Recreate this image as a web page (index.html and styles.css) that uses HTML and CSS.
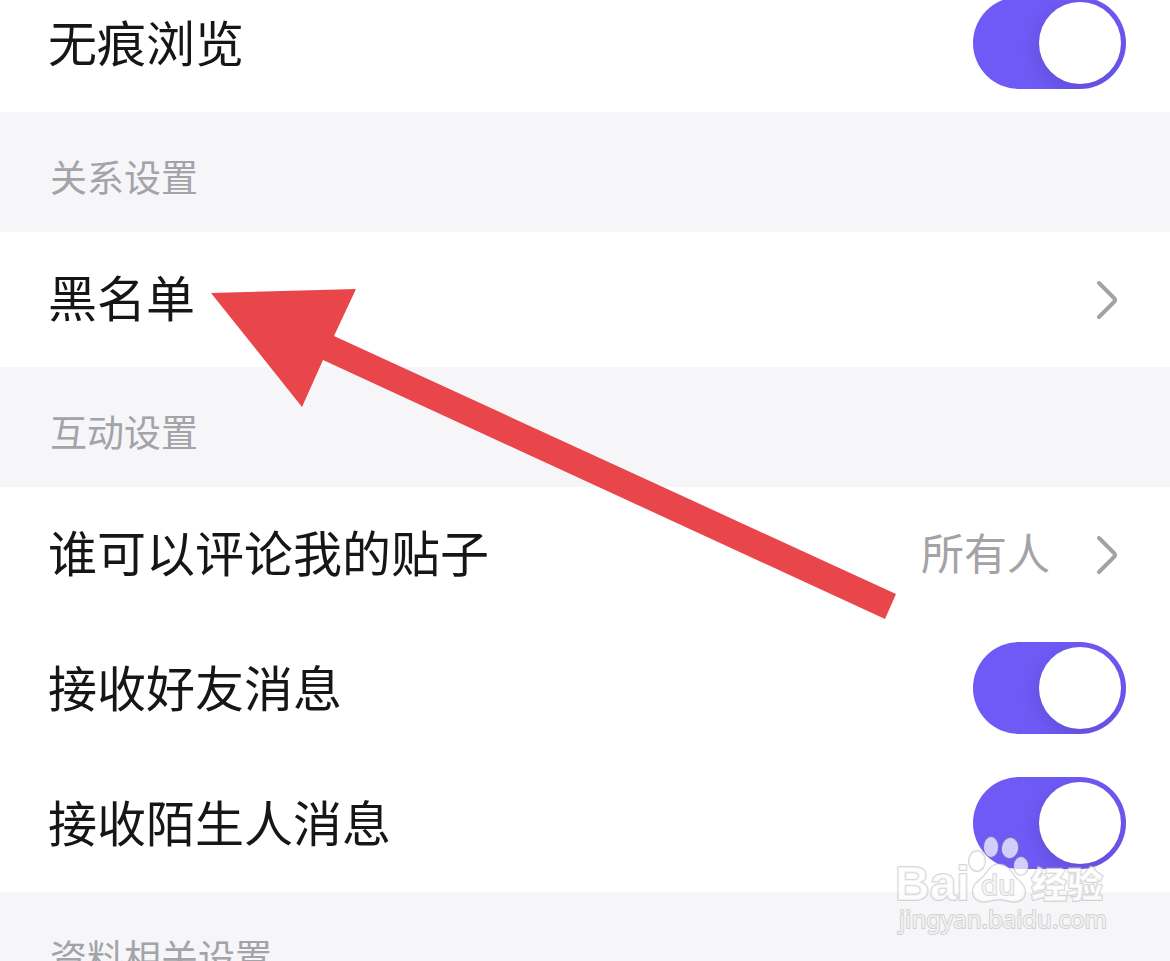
FILE: index.html
```
<!DOCTYPE html>
<html lang="zh-CN">
<head>
    <meta charset="UTF-8">
    <meta name="viewport" content="width=device-width, initial-scale=1.0">
    <title>隐私设置</title>
    <link rel="stylesheet" href="styles.css">
</head>
<body>
    <main class="page">
        <div class="settings">
            <div class="row">
                <label class="name" for="incognito">无痕浏览</label>
                <input type="checkbox" role="switch" class="switch" id="incognito" checked>
            </div>

            <h2 class="section-title">关系设置</h2>
            <a href="#blacklist" class="row">
                <span class="name">黑名单</span>
                <svg class="chevron" viewBox="0 0 22 40"><path d="M3 3 L18 18 Q20 20 18 22 L3 37"/></svg>
            </a>

            <h2 class="section-title">互动设置</h2>
            <a href="#comments" class="row">
                <span class="name">谁可以评论我的贴子</span>
                <span class="value">所有人</span>
                <svg class="chevron" viewBox="0 0 22 40"><path d="M3 3 L18 18 Q20 20 18 22 L3 37"/></svg>
            </a>
            <div class="row">
                <label class="name" for="friendMessages">接收好友消息</label>
                <input type="checkbox" role="switch" class="switch" id="friendMessages" checked>
            </div>
            <div class="row">
                <label class="name" for="strangerMessages">接收陌生人消息</label>
                <input type="checkbox" role="switch" class="switch" id="strangerMessages" checked>
            </div>

            <h2 class="section-title">资料相关设置</h2>
        </div>

        <svg class="arrow" viewBox="0 0 686 330" aria-hidden="true">
            <path d="M0 4 L145 0 L123 47 L685 305 L674 330 L112 71 L91 118 Z"/>
        </svg>

        <svg class="watermark" viewBox="0 0 216 106">
            <g class="paw">
                <ellipse cx="82" cy="29" rx="8" ry="10"/>
                <ellipse cx="96" cy="15" rx="7" ry="10"/>
                <ellipse cx="115" cy="16" rx="8" ry="10" transform="rotate(8 115 16)"/>
                <ellipse cx="126" cy="34" rx="7" ry="9"/>
                <path d="M104 32 C95 32 93 41 87 46 C81 51 77 54 78 61 C79 68 86 71 94 69 C101 67 107 67 114 69 C122 71 130 68 130 60 C130 53 125 50 120 45 C116 40 113 32 104 32 Z"/>
            </g>
            <text class="brand" x="0" y="68">Bai</text>
            <text class="du" x="86" y="63">du</text>
            <text class="brand-cn" x="136" y="66">经验</text>
            <text class="site" x="4" y="96">jingyan.baidu.com</text>
        </svg>
    </main>
</body>
</html>
```
FILE: styles.css
```
* {
    box-sizing: border-box;
}
body {
    margin: 0;
    background-color: white;
    color: #161616;
    font-family: "Noto Sans CJK SC", sans-serif;
}
.page {
    position: relative;
    height: 100vh;
    overflow: hidden;
}
/* list is scrolled a little past its first row */
.settings {
    margin-top: -23px;
}
.row {
    display: flex;
    align-items: center;
    min-height: 135px;
    padding: 0 44px 0 48px;
    color: inherit;
    font-size: 49px;
    line-height: 72px;
    text-decoration: none;
}
.name {
    flex: 1;
    padding-bottom: 8px;
}
.value {
    margin-right: 46px;
    padding-bottom: 8px;
    color: #a3a3a6;
    font-size: 43px;
}
.section-title {
    height: 120px;
    margin: 0;
    padding: 37px 50px 0;
    background-color: #f6f6f9;
    color: #a3a3a8;
    font-size: 37px;
    font-weight: 400;
    line-height: 54px;
}
.chevron {
    width: 22px;
    height: 40px;
    margin-right: 8px;
    fill: none;
    stroke: #a3a3a6;
    stroke-width: 4;
    stroke-linecap: round;
}
.switch {
    appearance: none;
    width: 153px;
    height: 92px;
    margin: 0 0 4px;
    padding: 5px;
    border-radius: 46px;
    background-color: #ccc;
    overflow: hidden;
    cursor: pointer;
}
.switch::before {
    content: "";
    display: block;
    width: 82px;
    height: 82px;
    border-radius: 50%;
    background-color: white;
    box-shadow: 0 6px 20px rgba(0, 0, 0, 0.14);
}
.switch:checked {
    background-color: #6f5af6;
}
.switch:checked::before {
    margin-left: auto;
}
.arrow {
    position: absolute;
    top: 289px;
    left: 211px;
    width: 686px;
    height: 330px;
    fill: #e9464b;
    pointer-events: none;
}
.watermark {
    position: absolute;
    top: 832px;
    right: 59px;
    width: 216px;
    height: 106px;
    fill: rgba(255, 255, 255, 0.7);
    stroke: rgba(150, 150, 150, 0.4);
    stroke-width: 2;
    stroke-linejoin: round;
    paint-order: stroke;
    pointer-events: none;
}
.brand {
    font: bold 48px "Liberation Sans", sans-serif;
}
.du {
    font: 28px "Noto Sans", sans-serif;
}
.brand-cn {
    font: 900 36px "Noto Sans CJK SC", sans-serif;
}
.site {
    font: 24px "Noto Sans", sans-serif;
}
```
